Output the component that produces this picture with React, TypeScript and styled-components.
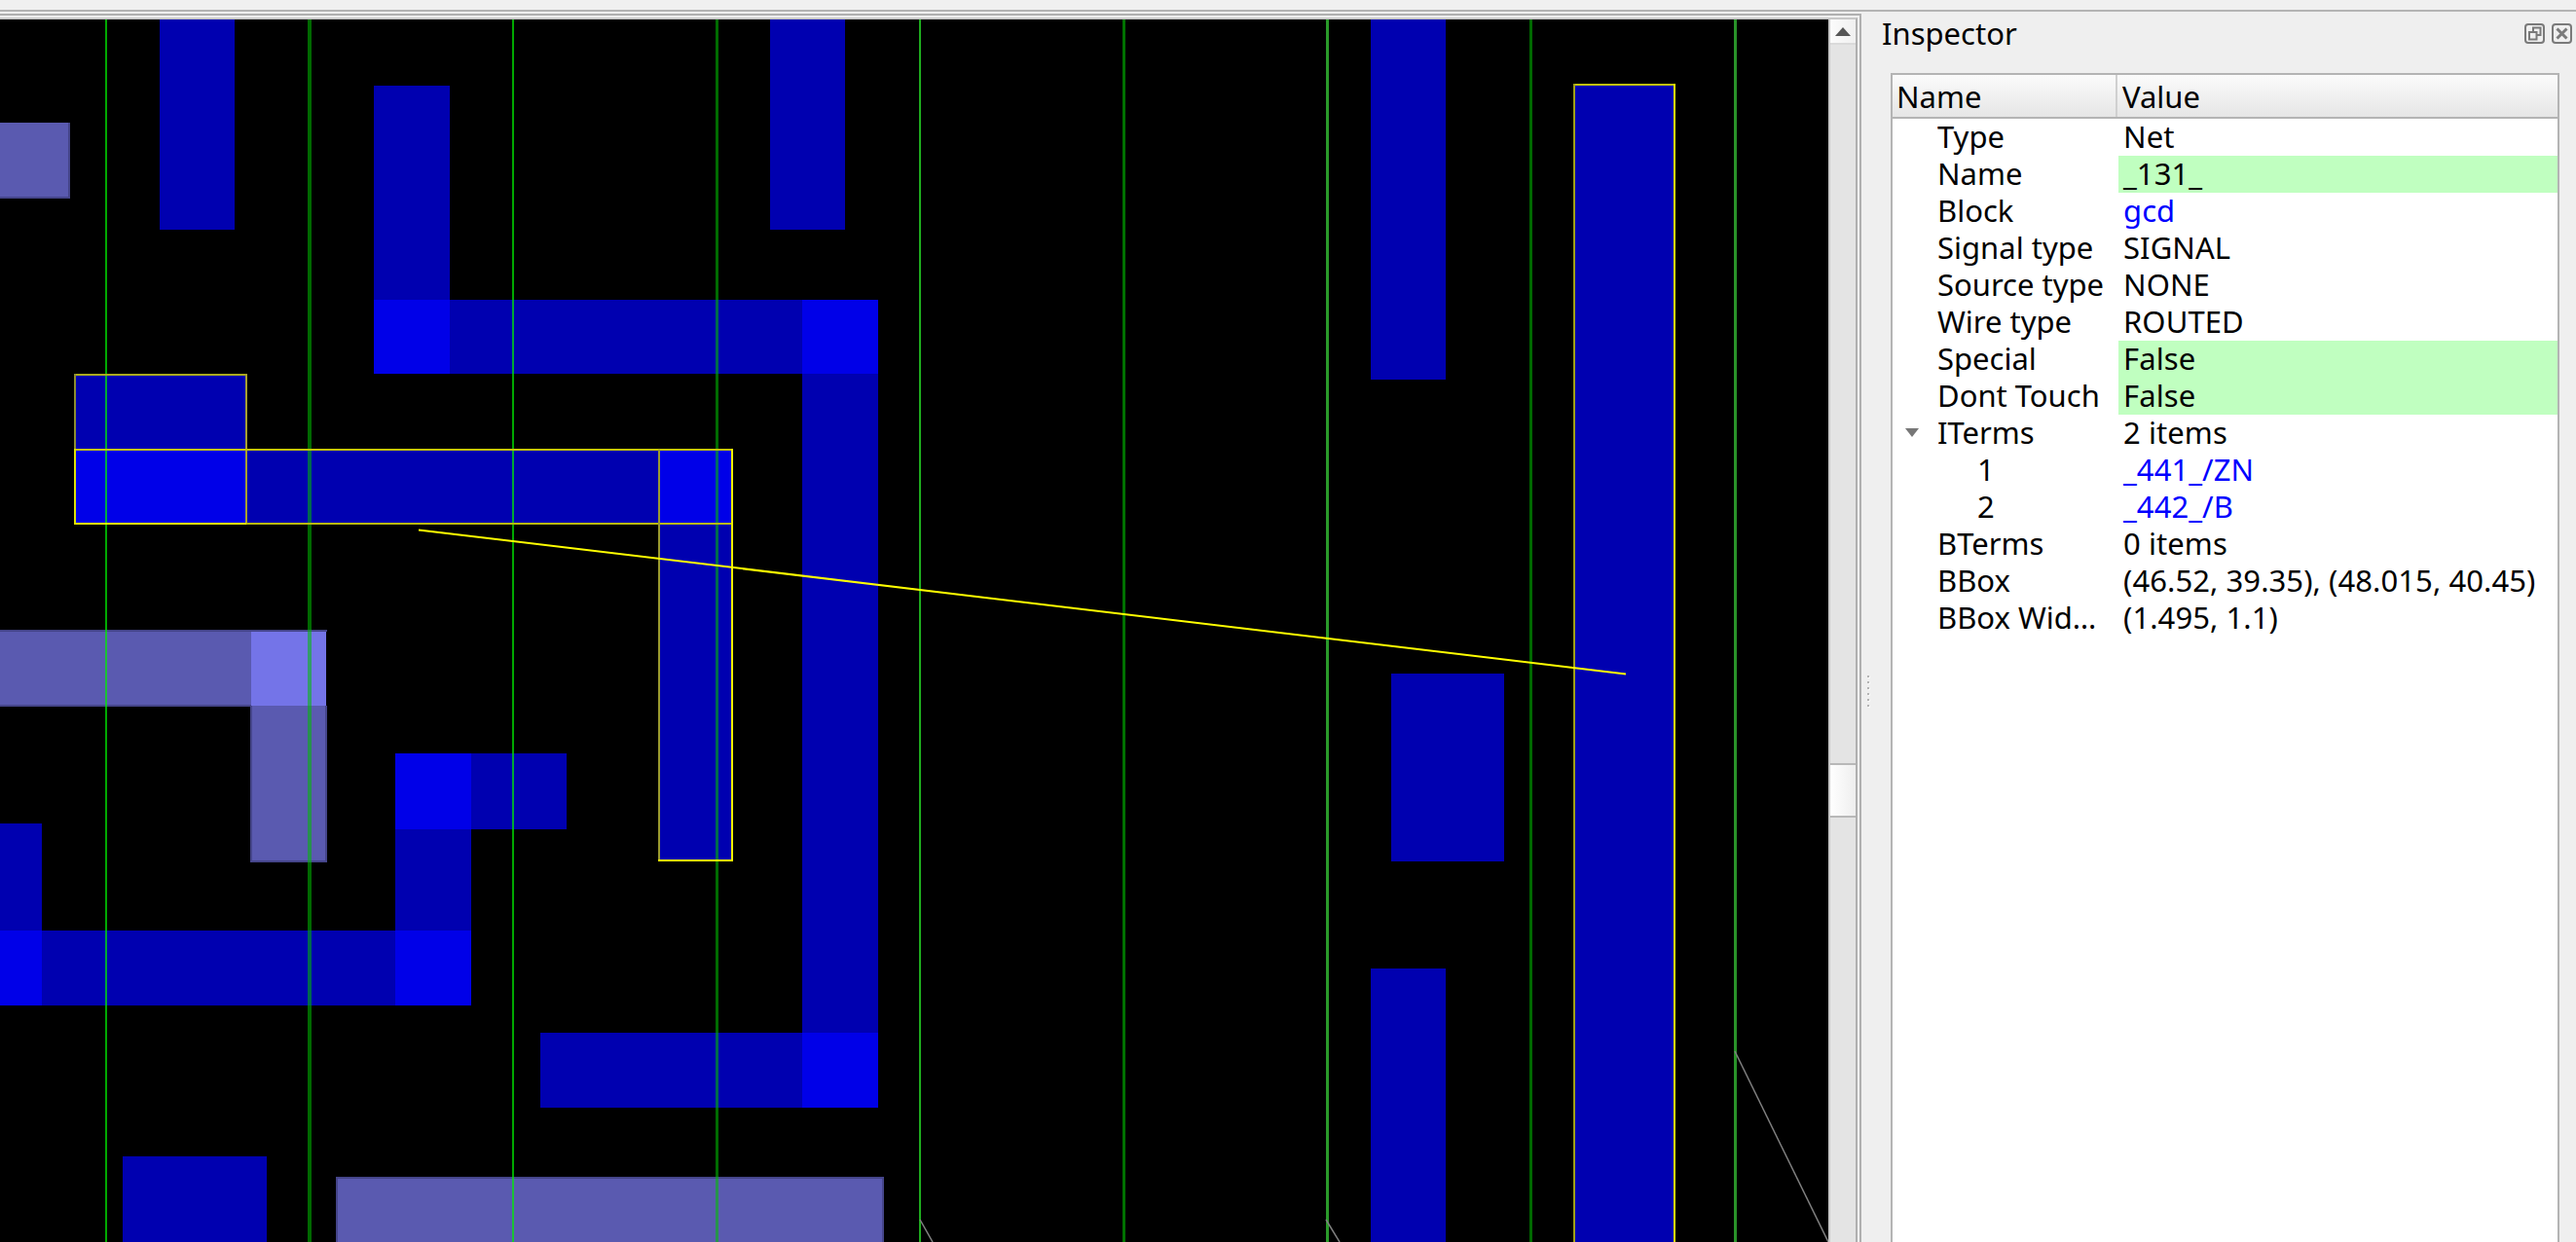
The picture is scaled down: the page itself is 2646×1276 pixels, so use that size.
import React from "react";
import styled, { createGlobalStyle } from "styled-components";

const Global = createGlobalStyle`
  html, body { margin: 0; padding: 0; background: #efefef; overflow: hidden; }
  #root { width: 2646px; height: 1276px; }
`;

const Window = styled.div`
  width: 2646px;
  height: 1276px;
  display: flex;
  flex-direction: column;
  overflow: hidden;
  background: #efefef;
  font-family: "Noto Sans", "Open Sans", sans-serif;
  color: #000;
`;

const MenuEdge = styled.div`
  flex: none;
  height: 12px;
  box-sizing: border-box;
  background: #f0f0f0;
  border-bottom: 2px solid #b4b4b4;
`;

const Workspace = styled.div`
  flex: 1;
  min-height: 0;
  display: flex;
`;

const ViewColumn = styled.div`
  flex: none;
  width: 1912px;
  padding-top: 2px;
  box-sizing: border-box;
  display: flex;
`;

const OuterFrame = styled.div`
  flex: 1;
  min-width: 0;
  display: flex;
  box-sizing: border-box;
  border-top: 2px solid #b0b0b0;
  border-right: 2px solid #b0b0b0;
  padding: 2px 2px 0 0;
`;

const InnerFrame = styled.div`
  flex: 1;
  min-width: 0;
  display: flex;
  box-sizing: border-box;
  border-top: 2px solid #c8c8c8;
  border-right: 2px solid #b0b0b0;
`;

const CanvasBox = styled.div`
  flex: none;
  width: 1878px;
  height: 1256px;
  background: #000;
`;

const Canvas = styled.svg`
  display: block;
`;

const ScrollBar = styled.div`
  flex: 1;
  display: flex;
  flex-direction: column;
  box-sizing: border-box;
  background: #e4e4e4;
  border-left: 2px solid #c8c8c8;
`;

const ScrollButton = styled.div`
  flex: none;
  height: 26px;
  box-sizing: border-box;
  display: flex;
  align-items: center;
  justify-content: center;
  background: linear-gradient(to right, #fbfbfb, #f0f0f0);
  border-bottom: 2px solid #dadada;
`;

const ScrollGap = styled.div`
  flex: none;
  height: 738px;
`;

const ScrollThumb = styled.div`
  flex: none;
  height: 56px;
  box-sizing: border-box;
  background: linear-gradient(to right, #ffffff, #eeeeee);
  border-top: 2px solid #b8b8b8;
  border-bottom: 2px solid #b8b8b8;
`;

const Dock = styled.div`
  flex: 1;
  min-width: 0;
  display: flex;
  flex-direction: column;
  background: #efefef;
`;

const DockTitleBar = styled.div`
  flex: none;
  height: 63px;
  box-sizing: border-box;
  display: flex;
  align-items: flex-start;
  padding: 12px 4px 0 21px;
`;

const DockTitle = styled.div`
  flex: 1;
  font-size: 31px;
  line-height: 20px;
`;

const DockIcon = styled.svg`
  flex: none;
  margin-left: 7px;
  display: block;
`;

const DockBody = styled.div`
  flex: 1;
  min-height: 0;
  display: flex;
`;

const SplitHandle = styled.div`
  flex: none;
  width: 30px;
  box-sizing: border-box;
  padding: 619px 0 0 6px;
  display: flex;
  flex-direction: column;
  gap: 4px;
`;

const SplitDot = styled.div`
  width: 2px;
  height: 2px;
  background: #b4b4b4;
  box-shadow: 1px 1px 0 #fafafa;
`;

const Tree = styled.div`
  flex: none;
  width: 687px;
  box-sizing: border-box;
  background: #fff;
  border: 2px solid #b4b4b4;
  border-bottom: none;
  display: flex;
  flex-direction: column;
  font-size: 31px;
`;

const HeaderRow = styled.div`
  flex: none;
  height: 45px;
  box-sizing: border-box;
  display: grid;
  grid-template-columns: 231px 1fr;
  background: linear-gradient(to bottom, #fbfbfb, #e6e6e6);
  border-bottom: 2px solid #b4b4b4;
`;

const HeaderCell = styled.div<{ $first?: boolean }>`
  display: flex;
  align-items: center;
  padding-left: ${(p) => (p.$first ? "4px" : "5px")};
  border-right: ${(p) => (p.$first ? "2px solid #d0d0d0" : "none")};
  box-sizing: border-box;
`;

const Row = styled.div`
  flex: none;
  height: 38px;
  display: grid;
  grid-template-columns: 232px 1fr;
  line-height: 36px;
  white-space: nowrap;
`;

const NameCell = styled.div<{ $depth?: number }>`
  position: relative;
  padding-left: ${(p) => (p.$depth ? 87 : 46)}px;
`;

const ValueCell = styled.div<{ $edited?: boolean; $link?: boolean }>`
  padding-left: 5px;
  letter-spacing: 0.08px;
  background: ${(p) => (p.$edited ? "#c0ffc0" : "transparent")};
  color: ${(p) => (p.$link ? "#0000ff" : "#000")};
`;

const Expander = styled.svg`
  position: absolute;
  left: 13px;
  top: 14px;
`;

const W = 1878;
const H = 1256;

const dark = "#0000b0";
const bright = "#0000e8";
const lav = "#5a5ab0";
const lavBright = "#7474e8";
const edge = "#45458a";

type R = [number, number, number, number, string];
const rects: R[] = [
  [0, 126, 71, 203, lav],
  [164, 20, 241, 236, dark],
  [791, 20, 868, 236, dark],
  [384, 88, 462, 308, dark],
  [384, 308, 902, 384, dark],
  [384, 308, 462, 384, bright],
  [824, 308, 902, 384, bright],
  [824, 384, 902, 1061, dark],
  [76, 384, 253, 461, dark],
  [76, 461, 753, 539, dark],
  [76, 461, 253, 539, bright],
  [676, 461, 753, 539, bright],
  [676, 539, 753, 885, dark],
  [0, 648, 335, 725, lav],
  [258, 725, 335, 885, lav],
  [258, 648, 335, 725, lavBright],
  [406, 774, 582, 852, dark],
  [406, 774, 484, 852, bright],
  [406, 852, 484, 956, dark],
  [0, 846, 43, 956, dark],
  [0, 956, 484, 1033, dark],
  [0, 956, 43, 1033, bright],
  [406, 956, 484, 1033, bright],
  [555, 1061, 902, 1138, dark],
  [824, 1061, 902, 1138, bright],
  [126, 1188, 274, 1276, dark],
  [346, 1210, 907, 1276, lav],
  [1408, 20, 1485, 390, dark],
  [1616, 86, 1721, 1276, dark],
  [1429, 692, 1545, 885, dark],
  [1408, 995, 1485, 1276, dark],
  [70, 126, 72, 204, edge],
  [0, 202, 72, 204, edge],
  [0, 647, 336, 649, edge],
  [0, 724, 258, 726, edge],
  [257, 725, 259, 886, edge],
  [334, 725, 336, 886, edge],
  [257, 884, 336, 886, edge],
  [346, 1209, 908, 1211, edge],
  [345, 1209, 347, 1276, edge],
  [906, 1209, 908, 1276, edge],
];

const greens: [number, number, string][] = [
  [108, 2, "rgba(0,240,0,0.7)"],
  [316, 4, "rgba(0,190,0,0.55)"],
  [526, 2, "rgba(0,240,0,0.7)"],
  [735, 3, "rgba(0,190,0,0.57)"],
  [944, 2, "rgba(40,230,40,0.75)"],
  [1153, 3, "rgba(0,190,0,0.6)"],
  [1362, 3, "rgba(60,220,60,0.7)"],
  [1571, 3, "rgba(0,190,0,0.55)"],
  [1781, 3, "rgba(60,210,60,0.7)"],
];

type L = [number, number, number, number, string];
const yellows: L[] = [
  [76, 385, 254, 385, "#aaaa20"],
  [77, 384, 77, 461, "#8c8c30"],
  [253, 384, 253, 539, "#a8a030"],
  [76, 462, 753, 462, "#c4c40c"],
  [76, 538, 253, 538, "#f0f000"],
  [253, 538, 753, 538, "#b8b810"],
  [77, 461, 77, 539, "#e0e000"],
  [677, 462, 677, 885, "#9a9a30"],
  [752, 461, 752, 885, "#f0f000"],
  [676, 884, 753, 884, "#ffff00"],
  [1616, 87, 1721, 87, "#c0c010"],
  [1617, 86, 1617, 1276, "#a0a018"],
  [1720, 86, 1720, 1276, "#f0f000"],
];

const LayoutView = () => (
  <Canvas width={W} height={H} viewBox={`0 20 ${W} ${H}`}>
    <g shapeRendering="crispEdges">
      {rects.map(([x1, y1, x2, y2, c], i) => (
        <rect key={i} x={x1} y={y1} width={x2 - x1} height={y2 - y1} fill={c} />
      ))}
      {greens.map(([x, w, c]) => (
        <rect key={x} x={x} y={20} width={w} height={H} fill={c} />
      ))}
      {yellows.map(([x1, y1, x2, y2, c], i) => (
        <line key={i} x1={x1} y1={y1} x2={x2} y2={y2} stroke={c} strokeWidth={2} />
      ))}
    </g>
    <line x1={430} y1={544.5} x2={1670} y2={692.5} stroke="#ffff00" strokeWidth={2} />
    <g stroke="#808080" strokeWidth={1.5} fill="none">
      <line x1={1782} y1={1080} x2={1878} y2={1276} />
      <line x1={1362} y1={1253} x2={1376} y2={1276} />
      <line x1={945} y1={1253} x2={958} y2={1276} />
    </g>
  </Canvas>
);

const rows: { name: string; value: string; depth?: number; edited?: boolean; link?: boolean; open?: boolean }[] = [
  { name: "Type", value: "Net" },
  { name: "Name", value: "_131_", edited: true },
  { name: "Block", value: "gcd", link: true },
  { name: "Signal type", value: "SIGNAL" },
  { name: "Source type", value: "NONE" },
  { name: "Wire type", value: "ROUTED" },
  { name: "Special", value: "False", edited: true },
  { name: "Dont Touch", value: "False", edited: true },
  { name: "ITerms", value: "2 items", open: true },
  { name: "1", value: "_441_/ZN", depth: 1, link: true },
  { name: "2", value: "_442_/B", depth: 1, link: true },
  { name: "BTerms", value: "0 items" },
  { name: "BBox", value: "(46.52, 39.35), (48.015, 40.45)" },
  { name: "BBox Wid…", value: "(1.495, 1.1)" },
];

export default function App() {
  return (
    <Window>
      <Global />
      <MenuEdge />
      <Workspace>
        <ViewColumn>
          <OuterFrame>
            <InnerFrame>
              <CanvasBox>
                <LayoutView />
              </CanvasBox>
              <ScrollBar>
                <ScrollButton>
                  <svg width="16" height="9" viewBox="0 0 16 9">
                    <path d="M8 0 L16 9 L0 9 Z" fill="#555" />
                  </svg>
                </ScrollButton>
                <ScrollGap />
                <ScrollThumb />
              </ScrollBar>
            </InnerFrame>
          </OuterFrame>
        </ViewColumn>
        <Dock>
          <DockTitleBar>
            <DockTitle>Inspector</DockTitle>
            <DockIcon width="21" height="21" viewBox="0 0 21 21" fill="none" stroke="#7a7a7a" strokeWidth="2">
              <rect x="1" y="1" width="19" height="19" rx="3" />
              <rect x="9" y="4.5" width="7.5" height="7.5" />
              <rect x="5" y="9" width="7.5" height="7.5" fill="#efefef" />
            </DockIcon>
            <DockIcon width="21" height="21" viewBox="0 0 21 21" fill="none" stroke="#7a7a7a" strokeWidth="2">
              <rect x="1" y="1" width="19" height="19" rx="3" />
              <path d="M5.5 5.5 L15.5 15.5 M15.5 5.5 L5.5 15.5" strokeWidth="3" />
            </DockIcon>
          </DockTitleBar>
          <DockBody>
            <SplitHandle>
              {[0, 1, 2, 3, 4, 5].map((i) => (
                <SplitDot key={i} />
              ))}
            </SplitHandle>
            <Tree>
              <HeaderRow>
                <HeaderCell $first>Name</HeaderCell>
                <HeaderCell>Value</HeaderCell>
              </HeaderRow>
              {rows.map((r) => (
                <Row key={r.name}>
                  <NameCell $depth={r.depth}>
                    {r.open && (
                      <Expander width="14" height="9" viewBox="0 0 14 9">
                        <path d="M0 0 L14 0 L7 9 Z" fill="#777" />
                      </Expander>
                    )}
                    {r.name}
                  </NameCell>
                  <ValueCell $edited={r.edited} $link={r.link}>
                    {r.value}
                  </ValueCell>
                </Row>
              ))}
            </Tree>
          </DockBody>
        </Dock>
      </Workspace>
    </Window>
  );
}
